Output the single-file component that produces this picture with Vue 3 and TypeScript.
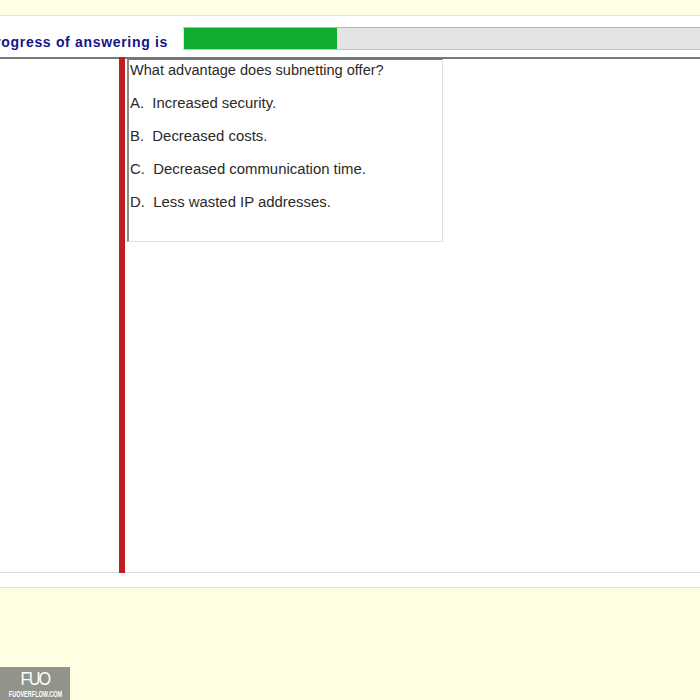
<script setup lang="ts">
const progress = 153;
const question = "What advantage does subnetting offer?";
const options: string[] = [
  "A.  Increased security.",
  "B.  Decreased costs.",
  "C.  Decreased communication time.",
  "D.  Less wasted IP addresses.",
];
</script>

<template>
  <div class="page">
    <div class="top-band"></div>
    <div class="progress-row">
      <div class="label-wrap">
        <span class="label">Your progress of answering is</span>
      </div>
      <div class="track">
        <div class="fill" :style="{ width: progress + 'px' }"></div>
      </div>
    </div>
    <div class="body">
      <div class="left"></div>
      <div class="divider"></div>
      <div class="content">
        <div class="card">
          <p class="question">{{ question }}</p>
          <p v-for="o in options" :key="o" class="option">{{ o }}</p>
        </div>
      </div>
    </div>
    <div class="bottom-strip"></div>
    <div class="bottom-band"></div>
    <div class="watermark">
      <span class="wm-logo">FUO</span>
      <span class="wm-site">FUOVERFLOW.COM</span>
    </div>
  </div>
</template>

<style>
html,
body {
  margin: 0;
  background: #ffffff;
}
</style>

<style scoped>
.page {
  position: relative;
  width: 700px;
  height: 700px;
  overflow: hidden;
  display: flex;
  flex-direction: column;
  background: #ffffff;
  font-family: "Liberation Sans", Arial, sans-serif;
}
.top-band {
  height: 15px;
  flex: none;
  background: #fffde3;
  border-bottom: 1px solid #e6e6dc;
}
.progress-row {
  height: 41px;
  flex: none;
  display: flex;
  align-items: flex-start;
  padding-top: 11px;
  box-sizing: border-box;
}
.label-wrap {
  width: 168px;
  flex: none;
  height: 30px;
  display: flex;
  justify-content: flex-end;
  align-items: center;
  overflow: hidden;
  margin-right: 15px;
}
.label {
  flex: none;
  white-space: nowrap;
  font-size: 14px;
  font-weight: 700;
  letter-spacing: 0.68px;
  color: #14148a;
}
.track {
  flex: 1;
  height: 23px;
  box-sizing: border-box;
  background: #e4e4e4;
  border-top: 1px solid #b8b8b8;
  border-bottom: 1px solid #c4c4c4;
  padding-left: 1px;
}
.fill {
  height: 21px;
  background: #0fae2e;
}
.body {
  flex: none;
  height: 516px;
  display: flex;
  border-top: 2px solid #777777;
  border-bottom: 1px solid #dcdcdc;
  box-sizing: border-box;
}
.left {
  width: 119px;
  flex: none;
}
.divider {
  width: 6px;
  flex: none;
  background: #bd1f1f;
  margin-top: -2px;
  margin-bottom: -1px;
}
.content {
  flex: 1;
  padding-left: 2px;
  min-width: 0;
}
.card {
  width: 316px;
  height: 183px;
  box-sizing: border-box;
  border-top: 1px solid #777777;
  border-left: 2px solid #8a8a8a;
  border-right: 1px solid #dedede;
  border-bottom: 1px solid #e0e0e0;
  padding-left: 1px;
  color: #2a2a2a;
}
.question {
  margin: 0;
  height: 21px;
  line-height: 21px;
  font-size: 14.55px;
  white-space: pre;
}
.option {
  margin: 12px 0 0;
  height: 21px;
  line-height: 21px;
  font-size: 14.9px;
  white-space: pre;
}
.bottom-strip {
  height: 14px;
  flex: none;
  border-bottom: 1px solid #e2e2da;
}
.bottom-band {
  flex: 1;
  background: #fffee3;
}
.watermark {
  position: absolute;
  left: 0;
  bottom: 0;
  width: 70px;
  height: 33px;
  background: #92938a;
  color: #ffffff;
  display: flex;
  flex-direction: column;
  align-items: center;
}
.wm-logo {
  font-size: 18px;
  line-height: 16px;
  margin-top: 4px;
  letter-spacing: -2px;
  transform: scale(0.9, 1.05);
}
.wm-site {
  font-size: 8.4px;
  font-weight: 700;
  line-height: 9px;
  margin-top: 3px;
  white-space: nowrap;
  transform: scaleX(0.66);
}
</style>
